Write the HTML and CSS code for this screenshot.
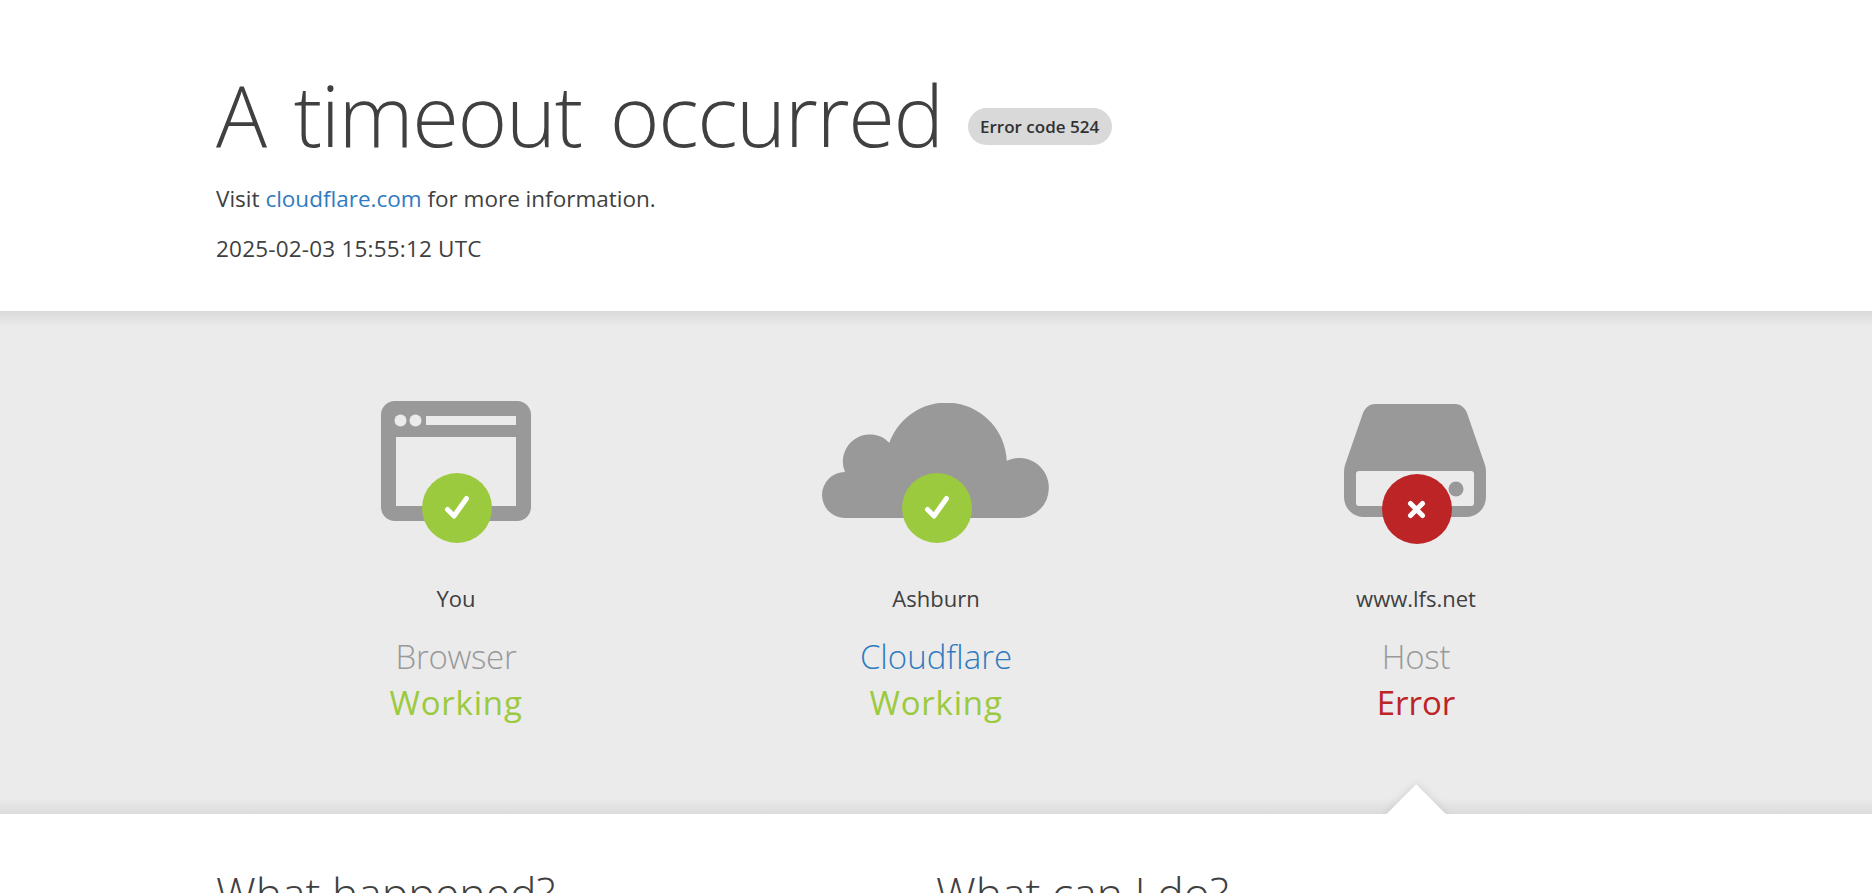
FILE: index.html
```html
<!DOCTYPE html>
<html lang="en">
<head>
<meta charset="utf-8">
<title>A timeout occurred</title>
<link rel="stylesheet" href="styles.css">
</head>
<body>
<header class="overview">
  <div class="wrapper">
    <div class="title-row">
      <h1 class="title">A timeout occurred</h1>
      <span class="code">Error code 524</span>
    </div>
    <p class="line visit">Visit <a class="link" href="#">cloudflare.com</a> for more information.</p>
    <p class="line stamp">2025-02-03 15:55:12 UTC</p>
  </div>
</header>
<section class="band">
  <div class="wrapper columns">
    <div class="node">
      <div class="icon">
        <svg class="glyph browser" viewBox="0 0 150 120" width="150" height="120">
          <path fill="#999" fill-rule="evenodd" d="M14 0H136A14 14 0 0 1 150 14V106A14 14 0 0 1 136 120H14A14 14 0 0 1 0 106V14A14 14 0 0 1 14 0ZM15 36V105H135V36ZM45 15V24H135V15Z"/>
          <circle cx="19.500" cy="19.500" r="6" fill="#ebebeb"/>
          <circle cx="34.500" cy="19.500" r="6" fill="#ebebeb"/>
        </svg>
        <svg class="badge badge-browser" viewBox="0 0 70 70" width="70" height="70">
          <circle cx="35" cy="35" r="35" fill="#9bca3e"/>
          <path d="M25.500 36.500L32 43L44.500 25.500" fill="none" stroke="#fff" stroke-width="5" stroke-linecap="round" stroke-linejoin="round"/>
        </svg>
      </div>
      <div class="place">You</div>
      <div class="role muted">Browser</div>
      <div class="state ok">Working</div>
    </div>
    <div class="node">
      <div class="icon">
        <svg class="glyph cloud" viewBox="0 0 227 115" width="227" height="115">
          <path fill="#999" d="M23 115A23 23 0 0 1 23 69A27 27 0 0 1 67.300 39.700A60.500 60.500 0 0 1 184.700 57.700A29.650 29.650 0 0 1 226.800 85.350A29.650 29.650 0 0 1 197 115Z"/>
        </svg>
        <svg class="badge badge-cloud" viewBox="0 0 70 70" width="70" height="70">
          <circle cx="35" cy="35" r="35" fill="#9bca3e"/>
          <path d="M25.500 36.500L32 43L44.500 25.500" fill="none" stroke="#fff" stroke-width="5" stroke-linecap="round" stroke-linejoin="round"/>
        </svg>
      </div>
      <div class="place">Ashburn</div>
      <a class="role link" href="#">Cloudflare</a>
      <div class="state ok">Working</div>
    </div>
    <div class="node">
      <div class="icon">
        <svg class="glyph server" viewBox="0 0 142 113" width="142" height="113">
          <path fill="#999" fill-rule="evenodd" d="M31 0H111C117 0 121 4 123 9L141 61Q142 64 142 68V93A20 20 0 0 1 122 113H20A20 20 0 0 1 0 93V68Q0 64 1 61L19 9C21 4 25 0 31 0ZM15 67A3 3 0 0 0 12 70V99A3 3 0 0 0 15 102H127A3 3 0 0 0 130 99V70A3 3 0 0 0 127 67Z"/>
          <circle cx="112" cy="85" r="7.500" fill="#999"/>
        </svg>
        <svg class="badge badge-server" viewBox="0 0 70 70" width="70" height="70">
          <circle cx="35" cy="35" r="35" fill="#bd2426"/>
          <path d="M28.500 29.500L40.500 41.500M40.500 29.500L28.500 41.500" fill="none" stroke="#fff" stroke-width="5" stroke-linecap="round"/>
        </svg>
      </div>
      <div class="place">www.lfs.net</div>
      <div class="role muted">Host</div>
      <div class="state bad">Error</div>
      <div class="pointer"><span class="pointer-shape"></span></div>
    </div>
  </div>
</section>
<section class="details">
  <div class="wrapper split">
    <h2 class="heading">What happened?</h2>
    <h2 class="heading">What can I do?</h2>
  </div>
</section>
</body>
</html>
```

FILE: styles.css
```css
html, body {
  margin: 0;
  height: 893px;
  overflow: hidden;
  background: #fff;
}
body {
  font-family: "Open Sans", "Noto Sans", "Liberation Sans", sans-serif;
  color: #404040;
}
.wrapper {
  width: 1440px;
  margin: 0 auto;
}
.overview {
  height: 311px;
  box-sizing: border-box;
  padding-top: 57px;
}
.title-row {
  display: flex;
  align-items: center;
  height: 114px;
}
.title {
  margin: 0;
  font-size: 85px;
  font-weight: 300;
  line-height: 114px;
  letter-spacing: -1.430px;
  word-spacing: 7.500px;
  white-space: nowrap;
}
.code {
  margin-left: 25px;
  margin-top: 24px;
  width: 144px;
  height: 37px;
  border-radius: 19px;
  background: #d9d9d9;
  font-size: 17px;
  font-weight: 600;
  line-height: 37px;
  text-align: center;
  color: #313131;
  white-space: nowrap;
}
.line {
  margin: 0;
  font-size: 22.500px;
  line-height: 30px;
  color: #404040;
}
.visit { margin-top: 13px; }
.stamp { margin-top: 20px; letter-spacing: 0.2px; }
.link { color: #2f7bbf; text-decoration: none; }
.band {
  height: 503px;
  box-sizing: border-box;
  padding-top: 1px;
  background: linear-gradient(#d9d9d9, #ebebeb 16px, #ebebeb calc(100% - 16px), #dcdcdc);
  overflow: hidden;
}
.columns {
  display: grid;
  grid-template-columns: repeat(3, 480px);
}
.node {
  position: relative;
  height: 502px;
  display: flex;
  flex-direction: column;
  align-items: center;
  text-align: center;
}
.icon {
  position: relative;
  width: 480px;
  height: 271px;
}
.glyph, .badge { position: absolute; display: block; }
.browser { left: 165px; top: 89px; }
.cloud { left: 126px; top: 91px; }
.server { left: 168px; top: 92px; }
.badge-browser { left: 206px; top: 161px; }
.badge-cloud { left: 206px; top: 161px; }
.badge-server { left: 206px; top: 162px; }
.place {
  font-size: 22px;
  line-height: 30px;
  height: 30px;
  color: #404040;
}
.role, .state {
  font-size: 33px;
  line-height: 46px;
  font-weight: 300;
}
.role { margin-top: 21px; }
.muted { color: #999; letter-spacing: -0.300px; }
.ok { color: #9bca3e; font-weight: 400; letter-spacing: 0.800px; }
.bad { color: #bd2426; font-weight: 400; }
.pointer {
  position: absolute;
  left: 170px;
  bottom: 0;
  width: 140px;
  height: 50px;
  overflow: hidden;
}
.pointer-shape {
  position: absolute;
  left: 49px;
  top: 29px;
  width: 42.400px;
  height: 42.400px;
  background: #fff;
  transform: rotate(45deg);
  box-shadow: 0 0 10px rgba(0,0,0,.12);
}
.details { padding-top: 49px; }
.split {
  display: grid;
  grid-template-columns: 720px 720px;
}
.heading {
  margin: 0;
  font-size: 44.500px;
  font-weight: 300;
  line-height: 60px;
  color: #404040;
}
```
